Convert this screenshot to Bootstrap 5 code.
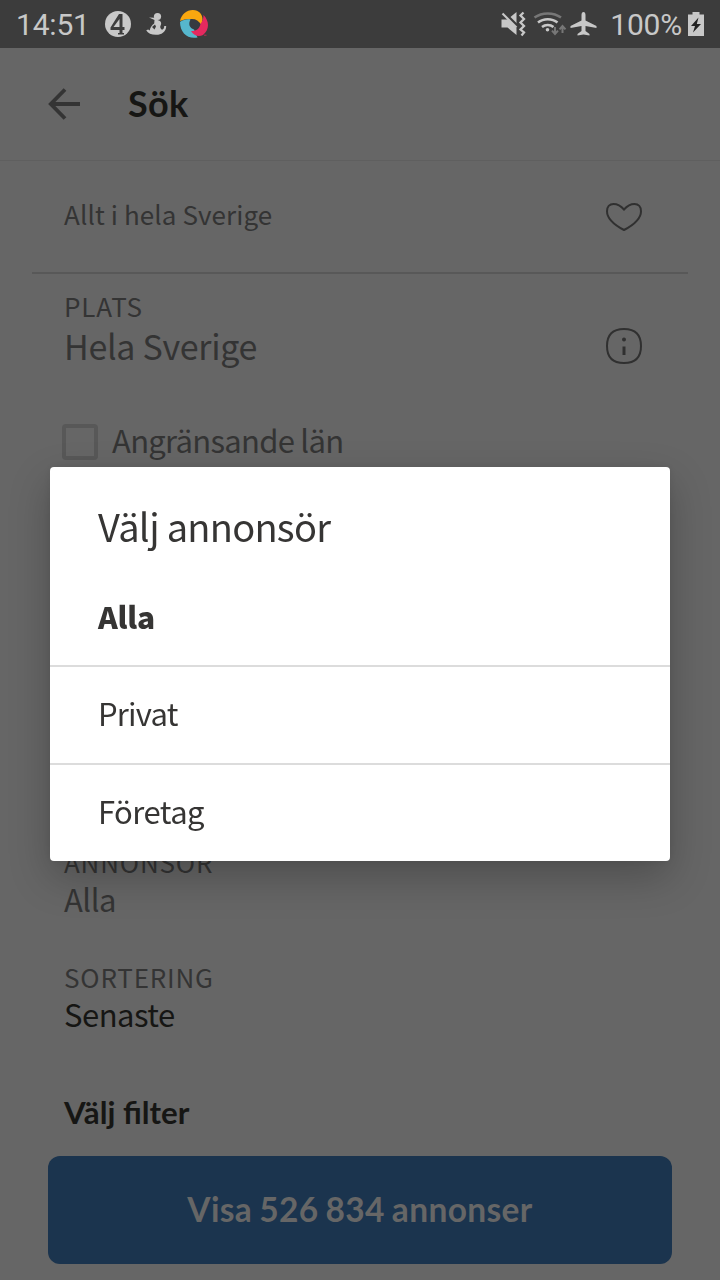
<!DOCTYPE html>
<html lang="sv">
<head>
<meta charset="utf-8">
<meta name="viewport" content="width=device-width, initial-scale=1">
<title>Sök</title>
<link rel="stylesheet" href="https://cdn.jsdelivr.net/npm/bootstrap@5.3.0/dist/css/bootstrap.min.css">
<style>
  :root { --reg: "Noto Sans CJK JP", "Noto Sans", sans-serif; --strong: Lato, "Noto Sans", sans-serif; }
  body { background: #666; color: #343434; font-family: var(--reg); overflow: hidden; }
  svg { display: block; flex: none; }
  .screen { width: 720px; height: 1280px; }
  .statusbar { height: 48px; background: #3c3c3c; color: #c8c8c8; font: 400 30px/48px Roboto, sans-serif; padding: 0 15px 0 16px; }
  .clock { width: 89px; padding-top: 1px; letter-spacing: -.2px; }
  .level { padding-top: 1px; letter-spacing: -.2px; margin: 0 6px 0 -1px; }
  .topbar { height: 113px; border-bottom: 1px solid #5f5f5f; padding: 0 48px; }
  .page-title { font: 700 36px/40px var(--strong); letter-spacing: .3px; color: #161614; margin: 0 0 0 48px; padding-bottom: 2px; }
  .saved { height: 113px; border-bottom: 2px solid #585858; margin: 0 32px; padding: 0 46px 0 32px; }
  .saved-text { font-size: 26px; line-height: 40px; letter-spacing: .1px; padding-bottom: 6px; }
  .fields { padding: 0 64px; }
  .field-label { font-size: 26px; line-height: 34px; letter-spacing: .8px; }
  .field-value { font-size: 31px; line-height: 40px; letter-spacing: -.5px; }
  .value-lg { font-size: 34px; letter-spacing: -.3px; margin-top: 3px; }
  .field-place { padding-top: 15px; height: 148px; }
  .info { margin: 39px 14px 0 0; }
  .neighbour { height: 40px; margin-left: -2px; gap: 14px; }
  .tick { width: 36px; height: 36px; border: 4px solid #585858; border-radius: 4px; }
  .neighbour .field-value { letter-spacing: -.72px; padding-bottom: 4px; }
  .field-seller { margin-top: 383px; height: 115px; }
  .field-sort { height: 132px; }
  .sorted { color: #161614; }
  .filter-title { font: 700 31.3px/40px var(--strong); color: #161614; margin: 0; }
  .btn-show { height: 108px; margin: 0 48px; padding-bottom: 8px; border: 0; border-radius: 12px; background: #1b344e; color: #666; font: 700 33.5px/40px var(--strong); letter-spacing: .35px; word-spacing: -1.5px; }
  .btn-show:hover { background: #1b344e; color: #666; }
  .overlay { padding-top: 48px; }
  .dialog { width: 620px; height: 394px; background: #fff; color: #363534; border-radius: 4px; box-shadow: 0 16px 42px rgba(0,0,0,.24), 0 0 10px rgba(0,0,0,.08); }
  .dialog-title { font: 400 38px/40px var(--reg); letter-spacing: -.75px; padding: 39px 48px 0; height: 102px; margin: 0; }
  .choice { height: 98px; border-bottom: 2px solid #dcdcdc; padding: 0 48px 5px; font-size: 31px; line-height: 40px; letter-spacing: -.8px; }
  .choice:last-child { border-bottom: 0; height: 96px; letter-spacing: -.55px; }
  .chosen { font-size: 30px; font-weight: 900; letter-spacing: -.2px; padding-bottom: 3px; }
</style>
</head>
<body>
<div class="screen d-flex flex-column">
  <header class="statusbar d-flex align-items-center">
    <span class="clock">14:51</span>
    <svg width="110" height="48" viewBox="105 0 110 48">
      <circle cx="118" cy="24" r="13" fill="#c8c8c8"/>
      <path d="M119 14h3.500v13h2v3h-2V33h1.500v1.500h-6V33h1.500v-3h-9v-2.500zM119.500 19l-6 8h6z" fill="#3c3c3c" fill-rule="evenodd"/>
      <g fill="#c8c8c8"><circle cx="157.500" cy="16.500" r="3.600"/><path d="M149 17.500l5.500.200 3.500 2.500c3 .500 4 3 2.500 5.500-.800 1.500.200 3 1.500 4 1.500-.500 2.300-1.700 2.200-3.700h2c0 4.500-3 8-8 8.700-5.500.700-10-1-12-4.500l2-.700 1.500 1c.500-3 2.300-5.500 4.500-7l.300-3.500z"/></g>
      <path d="M152 27l3-2.500 1 2-1.500 3z" fill="#3c3c3c"/>
      <circle cx="194" cy="24" r="10" fill="#363a40"/>
      <path d="M180 21C181.500 14 187 9.800 193 10c6 .200 9.500 4 9.500 9.500L201.500 25c-3-5-7-6.800-12-5.800-3.500 0-6.500.300-9.500 1.800z" fill="#f9a70f"/>
      <path d="M180 22c3-2.300 7-3 10.500-2.500-2.500 4.500-1 8.500 3.500 10l3.500 8c-10 2-17.500-5-17.500-15.500z" fill="#56b7cd"/>
      <path d="M203.500 15c6 6 6.200 14.500-.500 20-4.500 2.500-9 .500-12-4 5.500.200 8.500-2.500 9.500-7 2-3 3-5.500 3-9z" fill="#e5295f"/>
      <path d="M204 35.200h2.500" stroke="#b82a50"/>
    </svg>
    <svg class="ms-auto" width="111" height="48" viewBox="500 0 111 48">
      <path d="M501.500 19.500h6l9-7.500v23l-9-7.500h-6z" fill="#c8c8c8"/>
      <path d="M502 11l16 16" stroke="#3c3c3c" stroke-width="3.500"/>
      <path d="M502.500 13.500l14 14" stroke="#c8c8c8" stroke-width="2.200"/>
      <path d="M523.500 12.500l-3 3 3.500 3.500-3.500 3.500 3.500 3.500-3.500 3.500 3.500 3-2.500 3" fill="none" stroke="#c8c8c8" stroke-width="2.300"/>
      <g fill="none" stroke="#c8c8c8" stroke-width="2.500"><path d="M534.500 17.500c7.500-5.500 19-5.500 26.500 0" stroke="#777"/><path d="M538 22.500c5.500-4.500 14-4.500 19.500 0M542 27c3.200-2.700 8.300-2.700 11.500 0"/></g>
      <circle cx="547.500" cy="29.800" r="1.800" fill="#c8c8c8"/>
      <path d="M555 27v6.500m-3-2.800 3 3.300 3-3.300M562.500 33v-6.500m-3 2.800 3-3.300 3 3.300" fill="none" stroke="#777" stroke-width="2"/>
      <path d="M583.500 12c1.500 0 2 1.500 2 3v5.500l11 5.500v2l-11-2v5l4 3v1.500l-6-1-6 1V34l4-3v-5l-11 2v-2l11-5.500V15c0-1.500.500-3 2-3z" fill="#c8c8c8"/>
    </svg>
    <span class="level">100%</span>
    <svg width="17" height="48" viewBox="688 0 17 48">
      <path d="M692.500 12h7v2.500h4.500V36H688V14.500h4.500z" fill="#c8c8c8"/>
      <path d="M698.500 17.500l-7.500 8.500h4l-2 6.500 8-8.500h-4.200z" fill="#222"/>
    </svg>
  </header>

  <nav class="topbar d-flex align-items-center">
    <svg width="32" height="32" viewBox="0 0 32 32"><path d="M17 1.500 2.800 16 17 30.500M3 16h29" fill="none" stroke="#343434" stroke-width="3.800"/></svg>
    <h1 class="page-title">Sök</h1>
  </nav>

  <section class="saved d-flex align-items-center justify-content-between">
    <span class="saved-text">Allt i hela Sverige</span>
    <svg width="36" height="28" viewBox="0 0 36 28"><path d="M18 6.500C14.500 2.500 11 1 7.500 1 3.500 1 1 4 1 8.200 1 16 9.500 22.500 18 27c8.500-4.500 17-11 17-18.800C35 4 32.500 1 28.500 1 25 1 21.500 2.500 18 6.500z" fill="none" stroke="#303030" stroke-width="2"/></svg>
  </section>

  <main class="fields">
    <div class="field-place d-flex justify-content-between">
      <div>
        <div class="field-label">PLATS</div>
        <div class="field-value value-lg">Hela Sverige</div>
      </div>
      <svg class="info" width="36" height="36" viewBox="0 0 36 36"><path d="M18 1C29 1 35 7 35 18S29 35 18 35 1 29 1 18 7 1 18 1z" fill="none" stroke="#303030" stroke-width="2"/><circle cx="18" cy="11.500" r="2" fill="#303030"/><path d="M18 18.500V27" stroke="#303030" stroke-width="3"/></svg>
    </div>
    <div class="neighbour d-flex align-items-center">
      <span class="tick"></span>
      <span class="field-value">Angränsande län</span>
    </div>
    <div class="field-seller">
      <div class="field-label">ANNONSÖR</div>
      <div class="field-value">Alla</div>
    </div>
    <div class="field-sort">
      <div class="field-label">SORTERING</div>
      <div class="field-value sorted">Senaste</div>
    </div>
    <h2 class="filter-title">Välj filter</h2>
  </main>
  <button class="btn btn-show mt-auto mb-3" type="button">Visa 526 834 annonser</button>
</div>

<div class="overlay position-fixed top-0 start-0 w-100 h-100 d-flex align-items-center justify-content-center">
  <div class="dialog" role="dialog" aria-labelledby="dlg">
    <h2 class="dialog-title" id="dlg">Välj annonsör</h2>
    <div class="choice chosen d-flex align-items-center">Alla</div>
    <div class="choice d-flex align-items-center">Privat</div>
    <div class="choice d-flex align-items-center">Företag</div>
  </div>
</div>
<script src="https://cdn.jsdelivr.net/npm/bootstrap@5.3.0/dist/js/bootstrap.bundle.min.js"></script>
</body>
</html>
